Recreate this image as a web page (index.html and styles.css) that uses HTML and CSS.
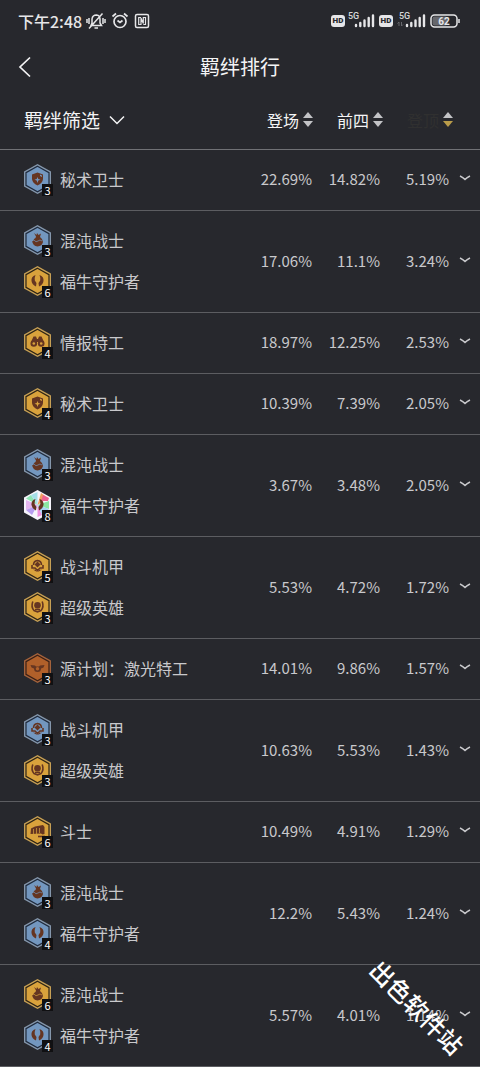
FILE: index.html
```html
<!DOCTYPE html>
<html lang="zh-CN">
  <head>
    <meta charset="utf-8" />
    <meta name="viewport" content="width=device-width, initial-scale=1" />
    <title>羁绊排行</title>
    <link rel="stylesheet" href="styles.css">
  </head>
  <body>
    <!-- shared icon shapes -->
    <svg class="sprites" aria-hidden="true">
      <symbol id="hex" viewBox="0 0 27 30">
        <polygon class="rim" points="13.5,0 27,7.5 27,22.5 13.5,30 0,22.5 0,7.5" />
        <polygon class="core" points="13.5,2.3 25,8.7 25,21.3 13.5,27.7 2,21.3 2,8.7" />
      </symbol>
      <symbol id="prism" viewBox="0 0 27 30">
        <polygon fill="#f6f4fb" points="13.5,0 27,7.5 27,22.5 13.5,30 0,22.5 0,7.5" />
        <polygon fill="#8fe6b4" points="13.5,15 2,8.5 7,5" />
        <polygon fill="#a5dfe8" points="13.5,15 7,5 13.5,2" />
        <polygon fill="#f0a05f" points="13.5,15 17,3 24,8" />
        <polygon fill="#ee6290" points="17,11 19,5 25,8 24,11" />
        <polygon fill="#8ce6a2" points="13.5,15 25,11 25,19" />
        <polygon fill="#e4b5ee" points="13.5,15 2,10 2,20" />
        <polygon fill="#b79df0" points="13.5,15 2,20 8,25" />
        <polygon fill="#ee8fe0" points="13.5,15 13.5,27 18,25" />
        <polygon fill="#a7d3f4" points="13.5,15 18,25 25,19" />
      </symbol>
      <symbol id="shield" viewBox="0 0 27 30">
        <path class="mark" d="M13.5 8.5 L19 10.5 V15 Q18.5 19 13.5 21.5 Q8.5 19 8 15 V10.5 Z" />
        <path class="cut" d="M13.5 13 L14.3 15 L16.5 15.8 L14.3 16.6 L13.5 19 L12.7 16.6 L10.5 15.8 L12.7 15 Z" />
        <path class="cut" d="M16 10.5 L18 11.5 V13 L16 12 Z" />
      </symbol>
      <symbol id="flame" viewBox="0 0 27 30">
        <path class="mark" d="M10 8 L12.5 10 L13 8 L14.5 10 L17 8.5 L16 12 Q19 14 19 17 Q18 21 13.5 21.5 Q9 21 8 16 Q9.5 17 10 14 Q12 13 12 11.5 Z" />
        <path class="line" d="M10 15 Q12 18 14 16 T18 16" />
      </symbol>
      <symbol id="horns" viewBox="0 0 27 30">
        <path class="mark" d="M11.5 9 Q7 10.5 7.5 15 Q8 18.5 12 20.5 L12.5 17 L10.8 14.5 Q10.3 12 11.5 9 Z" />
        <path class="mark" d="M15.5 9 Q20 10.5 19.5 15 Q19 18.5 15 20.5 L14.5 17 L16.2 14.5 Q16.7 12 15.5 9 Z" />
      </symbol>
      <symbol id="scope" viewBox="0 0 27 30">
        <path class="mark" d="M9.5 9.5 H12 L13 12 H14 L15 9.5 H17.5 L20 15 V18 H14.5 L14 15 H13 L12.5 18 H7 V15 Z" />
        <circle class="mark" cx="9.8" cy="16.5" r="3.3" />
        <circle class="mark" cx="17.2" cy="16.5" r="3.3" />
        <circle class="cut" cx="9.8" cy="16.5" r="1.3" />
        <circle class="cut" cx="17.2" cy="16.5" r="1.3" />
      </symbol>
      <symbol id="mech" viewBox="0 0 27 30">
        <path class="stroke" d="M9.5 14 Q9.5 10 13.5 9.5 Q17.5 10 17.5 14" />
        <path class="mark" d="M13.5 10.5 L16.5 13.5 L13.5 16.5 L10.5 13.5 Z" />
        <path class="stroke" d="M8 14 V17 L11 17 L13.5 19.5 L16 17 L19 17 V14" />
        <path class="mark" d="M9 18.5 L12 19 L13 21 Z M18 18.5 L15 19 L14 21 Z" />
      </symbol>
      <symbol id="hero" viewBox="0 0 27 30">
        <circle class="mark" cx="13.5" cy="13.3" r="3.3" />
        <path class="stroke" d="M8.8 9.5 Q6.8 15 10 18.5 L13.5 20 L17 18.5 Q20.2 15 18.2 9.5" />
        <path class="stroke" d="M11 17.5 H16" />
      </symbol>
      <symbol id="laser" viewBox="0 0 27 30">
        <path class="mark" d="M6.5 12 L11 12.5 L12 13.5 H15 L16 12.5 L20.5 12 L19.5 14.5 L17 15.5 A3.5 3.5 0 0 1 10 15.5 L7.5 14.5 Z" />
        <circle class="cut" cx="13.5" cy="15.8" r="1.7" />
      </symbol>
      <symbol id="fist" viewBox="0 0 27 30">
        <path class="mark" d="M7 12.5 L11 10.5 L19 9 L20.5 11 V18 L18.5 18.5 L17 17.5 L6.5 18 Z" />
        <path class="line" d="M9.5 13 V18 M12.5 12 V18 M15.5 12 V17" />
        <path class="stroke" d="M14 20.5 H21" />
      </symbol>
      <symbol id="chevron" viewBox="0 0 16 10">
        <path d="M1 1.5 L8 8.5 L15 1.5" fill="none" stroke="currentColor" stroke-width="1.5" />
      </symbol>
      <symbol id="more" viewBox="0 0 12 6">
        <path d="M1 1 Q4 2.5 6 4.5 Q8 2.5 11 1" fill="none" stroke="currentColor" stroke-width="1.5" />
      </symbol>
      <symbol id="signal" viewBox="0 0 28 18">
        <path d="M9 16 V15 M13.300 16 V13 M17.500 16 V10.500 M21.700 16 V8 M26 16 V5.500" stroke="currentColor" stroke-width="2.400" stroke-linecap="round" />
      </symbol>
    </svg>

    <header class="statusBar">
      <span class="clock">下午2:48</span>
      <svg class="muted" width="20" height="18" viewBox="0 0 20 18" fill="none" stroke="currentColor" stroke-width="1.5">
        <path d="M5 13.5 H15.5 L14 11 V7 Q14 3.5 10.5 3 Q6.5 3 6 7 V11 Z M8.5 16 H12 M3 16.5 L16.5 1.5 M1 7 V11 M3 6 V12 M17 6 V12 M19 7 V11" />
      </svg>
      <svg class="alarm" width="18" height="18" viewBox="0 0 18 18" fill="none" stroke="currentColor" stroke-width="1.7">
        <circle cx="9" cy="9.5" r="6" />
        <path d="M6.5 8.5 L9 10.5 L11.5 8.5 M1.5 4.5 L5 1.5 M16.5 4.5 L13 1.5" />
      </svg>
      <svg width="16" height="16" viewBox="0 0 16 16" fill="none" stroke="currentColor" stroke-width="1.5">
        <rect x="1.5" y="1.5" width="13" height="13" rx="1.5" />
        <path d="M7 4.5 H4.7 V11.5 H7 V5 L9.3 10.5 V4.5 H11.500 V11.500 H9.300" stroke-width="1.200" />
      </svg>
      <span class="phoneState">
        <span class="hd">HD</span>
        <svg class="bars" width="28" height="18">
          <use href="#signal" />
          <text x="1" y="9" class="net">5G</text>
        </svg>
        <span class="hd">HD</span>
        <svg class="bars" width="31" height="18">
          <use href="#signal" x="3" width="28" height="18" />
          <text x="4" y="9" class="net">5G</text>
          <path d="M4 12 V16 M2.500 13.500 L4 12 M6.500 12 V16 L8 14.500" fill="none" stroke="#66676c" />
        </svg>
        <svg class="battery" width="30" height="14" viewBox="0 0 30 14">
          <rect x="2.5" y="2.5" width="15" height="9" rx="2" fill="#66676c" />
          <rect x="1" y="1" width="26" height="12" rx="3.5" fill="none" stroke="currentColor" stroke-width="1.5" />
          <path d="M29 5 V9" stroke="currentColor" stroke-width="1.5" />
          <text x="14" y="10.5" class="charge">62</text>
        </svg>
      </span>
    </header>

    <nav class="titleBar">
      <button class="backButton" aria-label="返回">
        <svg width="14" height="22" viewBox="0 0 14 22"><path d="M12 1.5 L2 11 L12 20.5" fill="none" stroke="currentColor" stroke-width="1.7" /></svg>
      </button>
      <h1>羁绊排行</h1>
    </nav>

    <main>
      <table class="rankTable">
        <colgroup>
          <col>
          <col class="rateCol">
          <col class="rateCol">
          <col class="rateCol">
          <col class="moreCol">
        </colgroup>
        <thead>
          <tr>
            <th class="traits"><button class="filterButton">羁绊筛选<svg width="16" height="10"><use href="#chevron" /></svg></button></th>
            <th><button class="sortButton">登场<span class="arrows"></span></button></th>
            <th><button class="sortButton">前四<span class="arrows"></span></button></th>
            <th><button class="sortButton sorted"><span class="sortName">登顶</span><span class="arrows"></span></button></th>
            <th></th>
          </tr>
        </thead>
        <tbody>
          <tr>
            <td class="traits">
              <div class="trait"><span class="badge silver"><svg><use href="#hex" /><use href="#shield" /></svg><b>3</b></span>秘术卫士</div>
            </td>
            <td class="play">22.69%</td><td class="top">14.82%</td><td class="win">5.19%</td>
            <td><button class="moreButton" aria-label="展开"><svg><use href="#more" /></svg></button></td>
          </tr>
          <tr>
            <td class="traits">
              <div class="trait"><span class="badge silver"><svg><use href="#hex" /><use href="#flame" /></svg><b>3</b></span>混沌战士</div>
              <div class="trait"><span class="badge gold"><svg><use href="#hex" /><use href="#horns" /></svg><b>6</b></span>福牛守护者</div>
            </td>
            <td class="play">17.06%</td><td class="top">11.1%</td><td class="win">3.24%</td>
            <td><button class="moreButton" aria-label="展开"><svg><use href="#more" /></svg></button></td>
          </tr>
          <tr>
            <td class="traits">
              <div class="trait"><span class="badge gold"><svg><use href="#hex" /><use href="#scope" /></svg><b>4</b></span>情报特工</div>
            </td>
            <td class="play">18.97%</td><td class="top">12.25%</td><td class="win">2.53%</td>
            <td><button class="moreButton" aria-label="展开"><svg><use href="#more" /></svg></button></td>
          </tr>
          <tr>
            <td class="traits">
              <div class="trait"><span class="badge gold"><svg><use href="#hex" /><use href="#shield" /></svg><b>4</b></span>秘术卫士</div>
            </td>
            <td class="play">10.39%</td><td class="top">7.39%</td><td class="win">2.05%</td>
            <td><button class="moreButton" aria-label="展开"><svg><use href="#more" /></svg></button></td>
          </tr>
          <tr>
            <td class="traits">
              <div class="trait"><span class="badge silver"><svg><use href="#hex" /><use href="#flame" /></svg><b>3</b></span>混沌战士</div>
              <div class="trait"><span class="badge prismatic"><svg><use href="#prism" /><use href="#horns" /></svg><b>8</b></span>福牛守护者</div>
            </td>
            <td class="play">3.67%</td><td class="top">3.48%</td><td class="win">2.05%</td>
            <td><button class="moreButton" aria-label="展开"><svg><use href="#more" /></svg></button></td>
          </tr>
          <tr>
            <td class="traits">
              <div class="trait"><span class="badge gold"><svg><use href="#hex" /><use href="#mech" /></svg><b>5</b></span>战斗机甲</div>
              <div class="trait"><span class="badge gold"><svg><use href="#hex" /><use href="#hero" /></svg><b>3</b></span>超级英雄</div>
            </td>
            <td class="play">5.53%</td><td class="top">4.72%</td><td class="win">1.72%</td>
            <td><button class="moreButton" aria-label="展开"><svg><use href="#more" /></svg></button></td>
          </tr>
          <tr>
            <td class="traits">
              <div class="trait"><span class="badge bronze"><svg><use href="#hex" /><use href="#laser" /></svg><b>3</b></span>源计划：激光特工</div>
            </td>
            <td class="play">14.01%</td><td class="top">9.86%</td><td class="win">1.57%</td>
            <td><button class="moreButton" aria-label="展开"><svg><use href="#more" /></svg></button></td>
          </tr>
          <tr>
            <td class="traits">
              <div class="trait"><span class="badge silver"><svg><use href="#hex" /><use href="#mech" /></svg><b>3</b></span>战斗机甲</div>
              <div class="trait"><span class="badge gold"><svg><use href="#hex" /><use href="#hero" /></svg><b>3</b></span>超级英雄</div>
            </td>
            <td class="play">10.63%</td><td class="top">5.53%</td><td class="win">1.43%</td>
            <td><button class="moreButton" aria-label="展开"><svg><use href="#more" /></svg></button></td>
          </tr>
          <tr>
            <td class="traits">
              <div class="trait"><span class="badge gold"><svg><use href="#hex" /><use href="#fist" /></svg><b>6</b></span>斗士</div>
            </td>
            <td class="play">10.49%</td><td class="top">4.91%</td><td class="win">1.29%</td>
            <td><button class="moreButton" aria-label="展开"><svg><use href="#more" /></svg></button></td>
          </tr>
          <tr>
            <td class="traits">
              <div class="trait"><span class="badge silver"><svg><use href="#hex" /><use href="#flame" /></svg><b>3</b></span>混沌战士</div>
              <div class="trait"><span class="badge silver"><svg><use href="#hex" /><use href="#horns" /></svg><b>4</b></span>福牛守护者</div>
            </td>
            <td class="play">12.2%</td><td class="top">5.43%</td><td class="win">1.24%</td>
            <td><button class="moreButton" aria-label="展开"><svg><use href="#more" /></svg></button></td>
          </tr>
          <tr>
            <td class="traits">
              <div class="trait"><span class="badge gold"><svg><use href="#hex" /><use href="#flame" /></svg><b>6</b></span>混沌战士</div>
              <div class="trait"><span class="badge silver"><svg><use href="#hex" /><use href="#horns" /></svg><b>4</b></span>福牛守护者</div>
            </td>
            <td class="play">5.57%</td><td class="top">4.01%</td><td class="win">1.14%</td>
            <td><button class="moreButton" aria-label="展开"><svg><use href="#more" /></svg></button></td>
          </tr>
        </tbody>
      </table>
    </main>
    <div class="siteMark">出色软件站</div>
  </body>
</html>
```

FILE: styles.css
```css
* {
  box-sizing: border-box;
}
body {
  margin: 0;
  position: relative;
  min-height: 100vh;
  overflow-x: hidden;
  background-color: #27282d;
  color: #f4f4f5;
  font-family: "Noto Sans CJK SC", sans-serif;
}
button {
  padding: 0;
  border: 0;
  background: none;
  color: inherit;
  font: inherit;
  cursor: pointer;
}
svg {
  display: block;
  flex: none;
}
.sprites {
  position: absolute;
  width: 0;
  height: 0;
}

/* status bar */
.statusBar {
  display: flex;
  align-items: center;
  height: 42px;
  padding: 0 20px 0 18px;
  color: #e6e6e8;
}
.clock {
  margin-right: 4px;
  font-size: 16px;
  font-weight: 500;
}
.alarm {
  margin: 0 5px;
}
.phoneState {
  display: flex;
  align-items: center;
  margin-left: auto;
}
.bars {
  margin: 0 4px 4px 2px;
}
.hd {
  width: 14px;
  border-radius: 3px;
  background-color: #e6e6e8;
  color: #27282d;
  font: 900 8px/12px Roboto, sans-serif;
  text-align: center;
}
.net {
  font: 500 9px Roboto, sans-serif;
  fill: #d8d8da;
}
.charge {
  font: 700 10px Roboto, sans-serif;
  fill: #e6e6e8;
  text-anchor: middle;
}

/* title */
.titleBar {
  display: grid;
  grid-template-columns: 50px 1fr 50px;
  align-items: center;
  height: 50px;
}
.backButton {
  padding-left: 18px;
}
h1 {
  margin: 0;
  font-size: 20px;
  line-height: 28px;
  font-weight: 400;
  text-align: center;
}

/* ranking */
.rankTable {
  width: 100%;
  table-layout: fixed;
  border-spacing: 0;
}
.rateCol {
  width: 70px;
}
.moreCol {
  width: 27px;
}
th,
td {
  padding: 0;
  border-bottom: 1px solid #5c5d61;
  font-weight: 400;
  text-align: right;
}
th {
  height: 58px;
  padding-bottom: 2px;
  border-color: #707175;
}
td {
  padding: 14px 0 16px;
  color: #c9c9cc;
  font-size: 15px;
  line-height: 20px;
}
.traits {
  padding-left: 24px;
  text-align: left;
}
.play {
  padding-right: 1px;
}
.top {
  padding-right: 3px;
}
.win {
  padding-right: 4px;
}
.filterButton {
  display: flex;
  align-items: center;
  gap: 9px;
  font-size: 19px;
  line-height: 28px;
}
.sortButton {
  display: inline-flex;
  align-items: center;
  gap: 4px;
  font-size: 16px;
  line-height: 24px;
}
.arrows {
  display: grid;
  gap: 3px;
}
.arrows::before,
.arrows::after {
  content: "";
  border: 5px solid transparent;
  border-top: 0;
  border-bottom: 6px solid #c3c3c6;
}
.arrows::after {
  border-top: 6px solid #c3c3c6;
  border-bottom: 0;
}
.sorted .arrows::after {
  border-top-color: #b99c4a;
}
.sortName {
  color: #303030;
}
.trait {
  display: flex;
  align-items: center;
  gap: 9px;
  height: 30px;
  font-size: 16px;
  white-space: nowrap;
}
.trait + .trait {
  margin-top: 11px;
}
.badge {
  position: relative;
}
.badge svg {
  width: 27px;
  height: 30px;
}
.badge b {
  position: absolute;
  right: -2px;
  bottom: -2px;
  width: 11px;
  height: 12px;
  background-color: #101012;
  color: #fff;
  font-size: 11px;
  line-height: 12px;
  font-weight: 400;
  text-align: center;
}
.silver {
  --rim: #8597ac;
  --core: #7397bf;
  --edge: #1f2b3d;
}
.gold {
  --rim: #c7a055;
  --core: #d9a23c;
  --edge: #2e2415;
}
.bronze {
  --rim: #a5633c;
  --core: #b1602a;
  --edge: #3a2016;
}
.prismatic {
  --core: #fff;
}
.rim {
  fill: var(--rim);
}
.core {
  fill: var(--core);
  stroke: var(--edge);
  stroke-width: 1.2;
}
.mark {
  fill: #653521;
}
.cut {
  fill: var(--core);
}
.stroke {
  fill: none;
  stroke: #653521;
  stroke-width: 1.6;
}
.line {
  fill: none;
  stroke: var(--core);
  stroke-width: 0.7;
}
.moreButton {
  display: block;
  padding: 10px 9px 12px 6px;
}
.moreButton svg {
  width: 12px;
  height: 6px;
}

/* site name over the list corner */
.siteMark {
  position: absolute;
  right: 3px;
  bottom: 42px;
  color: #fff;
  font-size: 24px;
  line-height: 36px;
  font-weight: 500;
  transform: rotate(45deg);
  pointer-events: none;
}
```
